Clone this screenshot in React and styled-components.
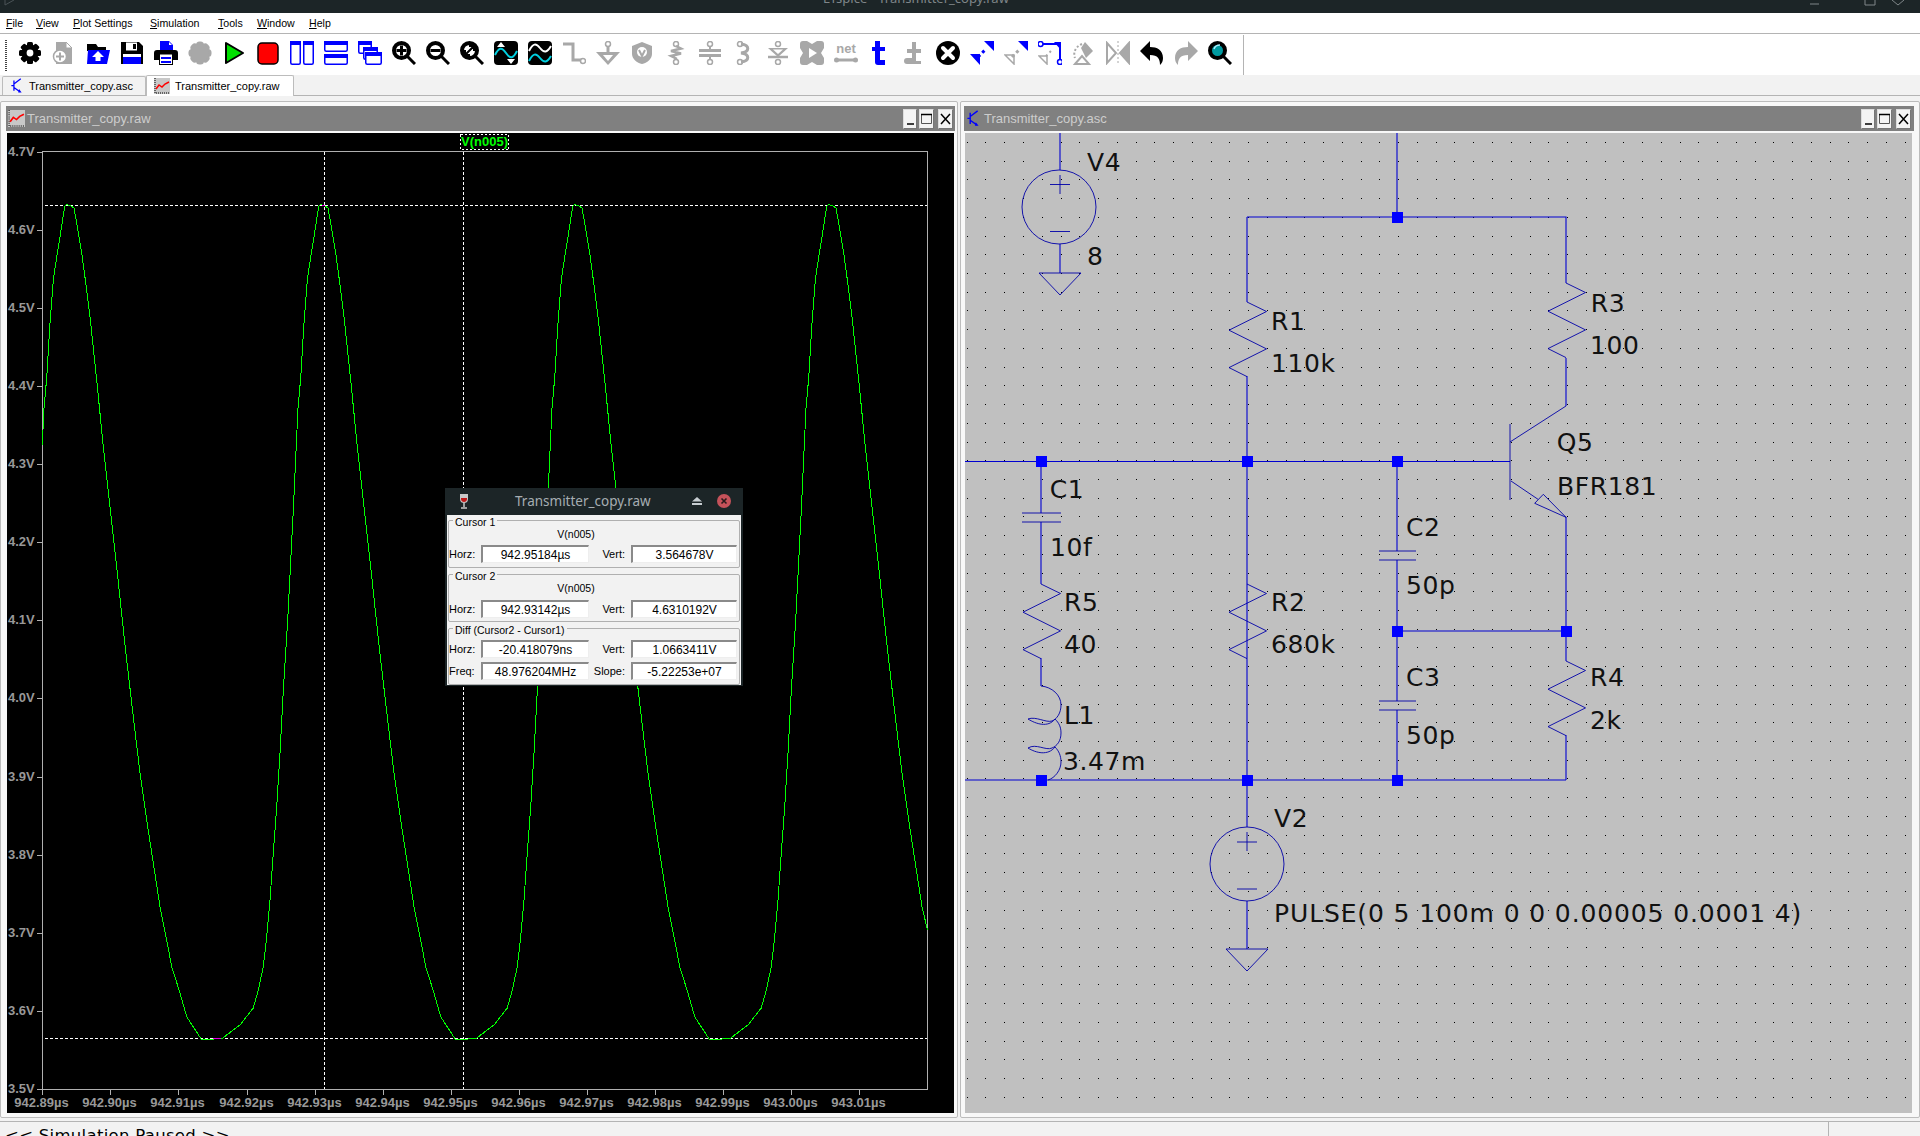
import React from 'react';
import styled, { createGlobalStyle } from 'styled-components';

const Global = createGlobalStyle`
  html, body { margin: 0; padding: 0; background: #f2f2f2; }
  #root { width: 1920px; height: 1136px; overflow: hidden; }
`;
const UI = `"Liberation Sans", Arial, sans-serif`;
const Page = styled.div`
  position: relative; width: 1920px; height: 1136px; overflow: hidden;
  display: flex; flex-direction: column; font-family: ${UI}; font-size: 11px; color: #000; background: #f2f2f2;
`;
const TitleBar = styled.div`
  flex: 0 0 13px; height: 13px; background: #1c2527; overflow: hidden; position: relative;
  display: flex; justify-content: center; padding-right: 88px; box-sizing: border-box;
`;
const TitleText = styled.div`
  font-family: "Noto Sans", sans-serif; font-size: 13px; line-height: 14px; margin-top: -9px; color: #7f8689; white-space: nowrap;
`;
const WmControls = styled.div`
  position: absolute; right: 0; top: 0; width: 120px; height: 13px;
`;
const WmLogo = styled.svg`
  position: absolute; left: 4px; top: 0; width: 14px; height: 6px;
`;
const MenuBar = styled.div`
  flex: 0 0 21px; height: 21px; box-sizing: border-box; background: #fff; border-bottom: 1px solid #b4b4b4;
  display: flex; align-items: center; padding: 1px 0 0 6px;
`;
const MenuItem = styled.div`
  width: ${p => p.$w}px; font-size: 10.6px; white-space: nowrap; padding-bottom: 1px;
  u { text-decoration-thickness: 1px; text-underline-offset: 1px; }
`;
const ToolBar = styled.div`
  flex: 0 0 41px; height: 41px; background: #fff; position: relative; display: flex; align-items: flex-start; padding: 7px 0 0 5px; box-sizing: border-box;
`;
const Grip = styled.div`
  width: 2px; height: 31px; margin-top: -1px; margin-right: 11px;
  background: repeating-linear-gradient(to bottom, #444 0 1px, #fff 1px 2px);
`;
const Tools = styled.div`display: flex; gap: 10px;`;
const IconBox = styled.svg`width: 24px; height: 24px; display: block;`;
const ToolSep = styled.div`width: 1px; height: 40px; margin: -6px 0 0 11px; background: #b4b4b4;`;
const TabBar = styled.div`
  flex: 0 0 21px; height: 21px; box-sizing: border-box; background: #f2f2f2; border-bottom: 1px solid #b4b4b4;
  display: flex; align-items: flex-end; padding-left: 2px;
`;
const Tab = styled.div`
  box-sizing: border-box; display: flex; align-items: center; gap: ${p => p.$active ? 5 : 7}px; height: ${p => p.$active ? 21 : 19}px;
  width: ${p => p.$active ? 148 : 144}px; padding-left: ${p => p.$active ? 7 : 8}px; font-size: 11px;
  background: ${p => p.$active ? '#fff' : '#f2f2f2'}; border: 1px solid #bcbcbc; border-bottom: 0; margin-bottom: ${p => p.$active ? -1 : 0}px;
  border-radius: 2px 2px 0 0; white-space: nowrap;
`;
const Mdi = styled.div`
  flex: 0 0 1025px; height: 1025px; box-sizing: border-box; display: flex; padding-top: 5px; gap: 2px; background: #f2f2f2;
`;
const Win = styled.div`
  box-sizing: border-box; width: ${p => p.$w}px; height: 1017px; border: 1px solid #bcbcbc; border-radius: 2px; background: #f8f8f8;
  padding: 4px ${p => p.$pr}px 0 ${p => p.$pl}px; display: flex; flex-direction: column;
`;
const WinTitle = styled.div`
  height: 25px; flex: 0 0 25px; background: #808080; display: flex; align-items: center; padding: 0 ${p => p.$pr}px 0 ${p => p.$pl}px; gap: 2px;
  color: #cdcdcd; font-size: 13px; margin-bottom: 2px;
`;
const WinName = styled.span`flex: 1; white-space: nowrap; margin-left: ${p => p.$ml || 0}px;`;
const WinBtn = styled.div`
  box-sizing: border-box; width: ${p => p.$w}px; height: 20px; background: #f4f4f4; border: 1px solid #ddd; border-right-color: #777; border-bottom-color: #777;
  display: flex; align-items: center; justify-content: center; margin-left: ${p => p.$ml}px;
`;
const Canvas = styled.svg`display: block; flex: 0 0 980px; width: 947px; height: 980px; margin-left: 1px; background: ${p => p.$bg};`;
const StatusBar = styled.div`
  flex: 0 0 15px; height: 15px; box-sizing: border-box; border-top: 1px solid #b4b4b4; padding: 4px 0 0 5px; display: flex; overflow: hidden; background: #f2f2f2;
`;
const StatusText = styled.div`font-family: "DejaVu Sans", sans-serif; font-size: 16.5px; letter-spacing: 0.3px; line-height: 20px; width: 1823px; white-space: nowrap;`;
const StatusCell = styled.div`border-left: 1px solid #b4b4b4; flex: 1; margin-top: -4px; height: 20px;`;

const AxisText = styled.text`font-family: ${UI}; font-weight: 700; font-size: 13px; fill: #989898;`;
const TraceText = styled.text`font-family: ${UI}; font-weight: 700; font-size: 13px; fill: #00ff00;`;
const SchText = styled.text`font-family: "DejaVu Sans", sans-serif; font-size: 25px; letter-spacing: ${p => p.$ls}px; fill: #111;`;

const Dialog = styled.div`
  position: absolute; left: 445px; top: 488px; width: 298px; height: 198px; background: #1c2527; box-sizing: border-box; padding: 0 2px 2px; display: flex; flex-direction: column;
`;
const DlgHead = styled.div`
  height: 27px; flex: 0 0 27px; box-sizing: border-box; padding: 0 0 2px 12px; display: flex; align-items: center; color: #a6adb2; font-family: "Noto Sans", sans-serif; font-size: 13.5px;
`;
const DlgTitle = styled.span`margin-left: 46px; flex: 1; white-space: nowrap;`;
const DlgBody = styled.div`flex: 1; background: #f2f2f2; padding: 5px 1px 0; display: flex; flex-direction: column; gap: 6px;`;
const Group = styled.div`
  position: relative; box-sizing: border-box; height: ${p => p.$h}px; border: 1px solid #b0b0b0; border-radius: 2px; padding-top: ${p => p.$pt}px;
  display: flex; flex-direction: column; gap: ${p => p.$gap}px;
`;
const Legend = styled.span`position: absolute; left: 4px; top: -5px; background: #f2f2f2; padding: 0 2px; font-size: 10.5px; line-height: 12px; white-space: nowrap;`;
const Trace = styled.div`text-align: center; font-size: 10.5px; line-height: 14px; padding-right: 36px;`;
const Row = styled.div`display: grid; grid-template-columns: 32px 108px 42px 106px; align-items: center; height: 18px;`;
const RowLabel = styled.span`font-size: 11px; ${p => p.$right ? 'text-align: right; padding-right: 6px;' : ''}`;
const Field = styled.div`
  box-sizing: border-box; height: 18px; background: #fff; border-top: 2px solid #8a8a8a; border-left: 2px solid #8a8a8a; border-right: 1px solid #eee; border-bottom: 1px solid #eee;
  text-align: center; font-size: 12px; line-height: 16px; white-space: nowrap;
`;

const G = '#a8a8a8', B = '#0000ff';
const I = ({ children }) => <IconBox viewBox="0 0 24 24">{children}</IconBox>;
const gear = c => (
  <g fill={c}>
    {[0, 45, 90, 135].map(a => <rect key={a} x="9" y="1" width="6" height="22" rx="1.5" transform={`rotate(${a} 12 12)`} />)}
    <circle cx="12" cy="12" r="8.5" /><circle cx="12" cy="12" r="3.4" fill="#fff" />
  </g>
);
const mag = (inner, fill = '#fff') => (
  <g>
    <line x1="15" y1="15" x2="23" y2="23" stroke="#000" strokeWidth="3" />
    <circle cx="9.5" cy="9.5" r="7.5" fill={fill} stroke="#000" strokeWidth="4" />
    {inner}
  </g>
);
const win = (x, y, w, h) => (
  <g key={`${x}${y}`}>
    <rect x={x + .75} y={y + .75} width={w - 1.5} height={h - 1.5} rx="1.5" fill="#fff" stroke={B} strokeWidth="1.5" />
    <rect x={x} y={y} width={w} height="4" fill={B} />
  </g>
);
const icons = [
  <I>{gear('#000')}</I>,
  <I><path d="M4 1h10l6 6v16H4z" fill={G} /><path d="M14 1l6 6h-6z" fill="#fff" stroke={G} /><circle cx="8" cy="15.5" r="6.5" fill="#fff" stroke={G} strokeWidth="1.5" /><path d="M8 11.5v8M4 15.5h8" stroke={G} strokeWidth="2" /></I>,
  <I><path d="M1 3h9l2 3h8v4H1z" fill="#000" /><path d="M2 9h22l-3 14H1z" fill={B} /><path d="M12 10l6 6h-3.5v4h-5v-4H6z" fill="#fff" /></I>,
  <I><path d="M1 1h18l4 4v18H1z" fill="#000" /><rect x="6" y="1.500" width="11" height="8" fill="#fff" /><rect x="13" y="3" width="3" height="5" fill="#000" /><rect x="3" y="15" width="18" height="8" fill={B} /><rect x="3" y="13" width="18" height="3" fill="#fff" /></I>,
  <I><path d="M6 0h9l4 4v6H6z" fill={B} /><path d="M15 1l3 3h-3z" fill="#fff" /><path d="M3 9h18a3 3 0 0 1 3 3v7h-5v-4H5v4H0v-7a3 3 0 0 1 3-3z" fill="#000" /><rect x="5.500" y="13" width="13" height="10.500" fill="#fff" stroke="#000" /><path d="M7 16h10v2H7zM7 20h10v2H7z" fill={B} /></I>,
  <I><g fill={G}>{[0, 45, 90, 135].map(a => <rect key={a} x="8" y="0.500" width="8" height="23" rx="3.500" transform={`rotate(${a} 12 12)`} />)}<circle cx="12" cy="12" r="9" /></g></I>,
  <I><path d="M4 2l17 10L4 22z" fill="#00e000" stroke="#000" strokeWidth="2" strokeLinejoin="round" /></I>,
  <I><rect x="2" y="2" width="20" height="21" rx="4" fill="#ff0000" stroke="#000" strokeWidth="1.5" /></I>,
  <I>{win(0, 0, 11, 24)}{win(13, 0, 11, 24)}</I>,
  <I>{win(0, 0, 24, 11)}{win(0, 13, 24, 11)}</I>,
  <I>{win(0, 0, 14, 13)}{win(5, 6, 15, 13)}{win(7, 11, 17, 13)}</I>,
  <I>{mag(<path d="M9.500 4.500v10M4.500 9.500h10" stroke="#000" strokeWidth="3" />)}</I>,
  <I>{mag(<path d="M4.500 9.500h10" stroke="#000" strokeWidth="3" />)}</I>,
  <I>{mag(<path d="M5 14L14 5M9 5h5v5M5 9v5h5" stroke="#000" strokeWidth="2" fill="none" />)}</I>,
  <I><rect width="24" height="24" rx="4" fill="#000" /><path d="M1 14c4-8 7-8 11-2s7 6 11-2" fill="none" stroke="#00d0e0" strokeWidth="2" /><path d="M7 1l4 5H3zM17 23l-4-5h8z" fill="#fff" /></I>,
  <I><rect width="24" height="24" rx="4" fill="#000" /><path d="M1 10c4-8 7-8 11-3s7 5 11-2" fill="none" stroke="#fff" strokeWidth="2" /><path d="M1 20c4-8 7-8 11-3s7 5 11-2" fill="none" stroke="#00d0e0" strokeWidth="2" /></I>,
  <I><path d="M1 3h10v16h9" fill="none" stroke={G} strokeWidth="3" /><circle cx="21" cy="20" r="2.500" fill="#fff" stroke={G} strokeWidth="1.500" /></I>,
  <I><circle cx="12" cy="3" r="2.500" fill="#fff" stroke={G} strokeWidth="1.500" /><path d="M12 5v7" stroke={G} strokeWidth="3" /><path d="M0 11h24L12 24z" fill={G} /><path d="M7 14h10l-5 6z" fill="#fff" /></I>,
  <I><path d="M12 1l10 4v8c0 5-5 9-10 10C7 22 2 18 2 13V5z" fill={G} /><circle cx="12" cy="11" r="5" fill="#fff" /><path d="M9 9l3 6 3-6" stroke={G} strokeWidth="2" fill="none" /></I>,
  <I><circle cx="12" cy="3" r="2.500" fill="#fff" stroke={G} strokeWidth="1.500" /><circle cx="12" cy="21" r="2.500" fill="#fff" stroke={G} strokeWidth="1.500" /><path d="M12 5l5 2.500L7 10l10 2.500L7 15l5 2.500V19" fill="none" stroke={G} strokeWidth="2.500" /></I>,
  <I><circle cx="12" cy="3" r="2.500" fill="#fff" stroke={G} strokeWidth="1.500" /><circle cx="12" cy="21" r="2.500" fill="#fff" stroke={G} strokeWidth="1.500" /><path d="M12 5v4M12 15v4" stroke={G} strokeWidth="2" /><path d="M1 9.500h22M1 14.500h22" stroke={G} strokeWidth="3" /></I>,
  <I><circle cx="8" cy="3" r="2.500" fill="#fff" stroke={G} strokeWidth="1.500" /><circle cx="8" cy="21" r="2.500" fill="#fff" stroke={G} strokeWidth="1.500" /><path d="M9 3c9 1 9 8 0 9 9 1 9 8 0 9" fill="none" stroke={G} strokeWidth="3" /></I>,
  <I><circle cx="12" cy="3" r="2.500" fill="#fff" stroke={G} strokeWidth="1.500" /><circle cx="12" cy="21" r="2.500" fill="#fff" stroke={G} strokeWidth="1.500" /><path d="M2 7h20L12 16z" fill={G} /><path d="M7 8.500h10L12 13z" fill="#fff" /><path d="M2 16h20" stroke={G} strokeWidth="2.500" /></I>,
  <I><rect width="24" height="24" rx="3" fill={G} /><path d="M9 7l8 5-8 5z" fill="#fff" /><path d="M0 7l3 5-3 5zM24 7l-3 5 3 5zM7 0h10l-5 3zM7 24h10l-5-3z" fill="#fff" /></I>,
  <I><text x="12" y="12" textAnchor="middle" fontFamily={UI} fontWeight="700" fontSize="13" fill={G}>net</text><path d="M2 19h20" stroke={G} strokeWidth="3" /><circle cx="2.500" cy="19" r="2.500" fill={G} /><circle cx="21.500" cy="19" r="2.500" fill={G} /></I>,
  <I><path d="M7 0h5v6h5v4h-5v9h5v5H10q-3 0-3-3V10H4V6h3z" fill={B} /></I>,
  <I><path d="M10 1h4v7h5v4h-5v8h5v3H5a3 3 0 0 1 0-6h5v-5H5V8h5z" fill={G} /></I>,
  <I><circle cx="12" cy="12" r="12" fill="#000" /><path d="M7 7l10 10M17 7L7 17" stroke="#fff" strokeWidth="4" strokeLinecap="round" /></I>,
  <I><path d="M14 0h10v10zM0 13h10v11z" fill={B} /><path d="M8 16l8-8" stroke={B} strokeWidth="3" strokeDasharray="3 3" /></I>,
  <I><path d="M14 0h10v10z" fill={B} /><path d="M1 14h9v9z" fill="#fff" stroke={G} strokeWidth="1.500" /><path d="M8 16l8-8" stroke={G} strokeWidth="3" strokeDasharray="3 3" /></I>,
  <I><path d="M2 3h20v17" fill="none" stroke={B} strokeWidth="2" /><circle cx="2.500" cy="3" r="2.500" fill="#fff" stroke={B} strokeWidth="1.500" /><circle cx="22" cy="21" r="2.500" fill="#fff" stroke={B} strokeWidth="1.500" /><path d="M16 1h7v8z" fill={B} /><path d="M1 15h8v8z" fill="#fff" stroke={G} strokeWidth="1.500" /><path d="M8 15l7-7" stroke={G} strokeWidth="2" strokeDasharray="2 3" /></I>,
  <I><path d="M13 1l8 9-7 7-5-10z" fill={G} /><path d="M3 23l7-8 7 8z" fill="#fff" stroke={G} strokeWidth="2" /><path d="M10 3C3 6 1 12 3 17" fill="none" stroke={G} strokeWidth="2" strokeDasharray="2 2" /></I>,
  <I><path d="M1 2l9 10-9 10zM23 2l-9 10 9 10z" fill="#fff" stroke={G} strokeWidth="2" /><path d="M23 2l-9 10 9 10z" fill={G} /><path d="M12 0v24" stroke={G} strokeDasharray="2 2" /></I>,
  <I><path d="M10 0v6c7 0 13 3 13 11 0 3-1 5-3 7 0-6-2-10-10-10v6L0 10z" fill="#000" /></I>,
  <I><path d="M14 0v6C7 6 1 9 1 17c0 3 1 5 3 7 0-6 2-10 10-10v6l10-10z" fill={G} /></I>,
  <I>{mag(<path d="M6 8c1-3 3-4 6-4" stroke="#aef" strokeWidth="1.500" fill="none" />, '#009aa0')}</I>,
];
const names = ['gear','new','open','save','print','halt','run','stop','tv','th','casc','zi','zo','zf','auto','wave','wire','gnd','label','res','cap','ind','diode','comp','net','text','dir','del','move','drag','dragw','rot','mirror','undo','redo','find'];

const TransIcon = ({ s = 13 }) => (
  <svg width={s} height={s * 1.4} viewBox="0 0 12 18"><path d="M3 3v12M0 9h3M3 7l8-6M3 11l7 5" fill="none" stroke="#0000ff" strokeWidth="1.500" /><path d="M9 13l3 4-4 0z" fill="#0000ff" /></svg>
);
const PlotIcon = ({ s = 16 }) => (
  <svg width={s} height={s} viewBox="0 0 16 16"><rect width="16" height="16" fill="#c8c8c8" /><path d="M1 0v15h15" fill="none" stroke="#000" strokeDasharray="1 1" /><path d="M2 11l3-4 3 2 3-3 4-2" fill="none" stroke="#ff0000" strokeWidth="1.500" /></svg>
);

const ptsBase = [
  [42.3,445],[44,408],[46.7,378],[50,323],[53.3,280],[56.7,257],[60,237],[63.3,215],[65,205.7],[66.7,204.5],[70.7,205.7],[74,208],[77.3,226.7],[81.7,253],[86.7,290],[90,316.7],[96.7,380],[103.3,446.7],[110,506.7],[116.7,566.7],[122.3,620],[126.7,660],[133.3,716.7],[140,773],[146.7,820],[153.3,863],[160,906.7],[166.7,940],[171.7,966.7],[180,993],[186.7,1016.7],[201.3,1039.3],[212,1039.3],[222.7,1038],[240,1025],[253.3,1008],[258.3,990],[263.3,966.7],[266.7,936.7],[270,900],[273.3,853],[276.7,806.7],[280,753],[283.3,690],[287.7,620],[293.3,510],
];
const wavePts = [];
for (let k = 0; k < 4; k++) for (const [x, y] of ptsBase) { const nx = x + k * 254; if (nx <= 928) wavePts.push(`${nx},${y}`); }
wavePts.push('927.5,930');

const Plot = () => {
  const yl = ['4.7V','4.6V','4.5V','4.4V','4.3V','4.2V','4.1V','4.0V','3.9V','3.8V','3.7V','3.6V','3.5V'];
  const xl = ['942.89','942.90','942.91','942.92','942.93','942.94','942.95','942.96','942.97','942.98','942.99','943.00','943.01'];
  const A = '#b0b0b0';
  return (
    <Canvas $bg="#000" viewBox="7 133 947 980">
      <rect x="42.500" y="151.500" width="885" height="937.500" fill="none" stroke={A} shapeRendering="crispEdges" />
      {yl.map((t, i) => {
        const y = Math.round(151.6 + i * 78.12) + .5;
        return <g key={t}><path d={`M37 ${y}h6`} stroke={A} shapeRendering="crispEdges" /><AxisText x="8" y={y + 3.5}>{t}</AxisText></g>;
      })}
      {xl.map((t, i) => {
        const x = Math.round(42.3 + i * 68.07) + .5;
        return <g key={t}><path d={`M${x} 1089v6`} stroke={A} shapeRendering="crispEdges" /><AxisText x={x - 1} y="1107" textAnchor="middle">{t}µs</AxisText></g>;
      })}
      <g stroke="#fff" strokeDasharray="3 2" shapeRendering="crispEdges">
        <path d="M45 205.500H927" /><path d="M45 1038.500H927" /><path d="M324.500 152V1089" /><path d="M463.500 152V1089" />
      </g>
      <polyline points={wavePts.join(' ')} fill="none" stroke="#00ff00" shapeRendering="crispEdges" />
      <path d="M213 1038.500h8M322 205.500h3" stroke="#e000e0" shapeRendering="crispEdges" />
      <rect x="460.500" y="134.500" width="48" height="15" fill="none" stroke="#fff" strokeDasharray="2 2" shapeRendering="crispEdges" />
      <TraceText x="484.500" y="146" textAnchor="middle">V(n005)</TraceText>
    </Canvas>
  );
};

const dots = (() => {
  let d = '';
  for (let i = 0; i <= 50; i++) for (let j = 0; j <= 52; j++) d += `M${Math.round(966.7 + i * 18.76)} ${Math.round(142 + j * 18.72)}h1v1h-1z`;
  return d;
})();
const zig = (x, y) => `M${x} ${y}l19.500 9.500l-37.500 18.700l37.500 18.700l-37.500 18.700l18 9`;
const W = '#0000d0', C = '#0000a8';
const nodes = [[1397,217],[1041,461],[1247,461],[1397,461],[1397,631],[1566,631],[1041,780],[1247,780],[1397,780]];
const labels = [
  ['V4',1087,170.700],['8',1087,264.700],['R1',1271,329.700],['110k',1271,372],['R3',1590.700,311.700],['100',1590,354],
  ['Q5',1556.700,450.700],['BFR181',1557,494.700],['C1',1049.700,498],['10f',1050,555.700],['R5',1064,611],['40',1064,653],
  ['L1',1064,724],['3.47m',1063,770],['R2',1271,611],['680k',1271,653],['C2',1406,536],['50p',1406,593.700],['C3',1406,686],['50p',1406,744],
  ['R4',1590,686],['2k',1590,728.500],['V2',1274,827],
];
const Schematic = () => (
  <Canvas $bg="#c0c0c0" viewBox="965 133 947 980">
    <path d={dots} fill="#000" shapeRendering="crispEdges" />
    <g fill="none" stroke={W} strokeWidth="1.100">
      <path d="M1060 133V170M1060 244V273" />
      <path d="M1397 133V217M1247 217H1566V283M1247 217V302M1247 376V780M965 461.500H1510M965 780H1566" />
      <path d="M1041 461V513M1041 522V584M1041 658V686" />
      <path d="M1397 461V551M1397 560V701M1397 710V780M1397 631H1566M1566 358V406M1566 517V661M1566 735V780" />
      <path d="M1247 780V827M1247 901V949" />
    </g>
    <g fill="none" stroke={C} strokeWidth="0.900">
      <circle cx="1059" cy="207" r="37" /><path d="M1050 184.500h20M1060 175v19M1050 231.500h20" />
      <path d="M1039 273h42l-21 22z" />
      <circle cx="1247" cy="864" r="37" /><path d="M1237 842h20M1247 832v19M1237 889h20" />
      <path d="M1226 949h42l-21 22z" />
      <path d={zig(1247, 302)} /><path d={zig(1566, 283)} /><path d={zig(1041, 584)} /><path d={zig(1247, 584)} /><path d={zig(1566, 661)} />
      <path d="M1022 513h39M1022 522h39M1379 551h37M1379 560h37M1379 701h37M1379 710h37" />
      <path d="M1510 424V500M1510 442L1566 406M1511 481L1538 499.300" />
      <path d="M1543.300 494.300L1534.700 503.300L1566 517.300z" />
      <path d="M1041 686C1052 687 1061 695 1061 705C1061 713 1057 719 1052 721C1046 723 1036 716 1028 719C1036 724 1048 728 1055 719M1055 719C1059 723 1061 727 1061 733C1061 741 1057 746 1052 748C1046 751 1036 743 1028 748C1036 753 1048 756 1055 747M1055 747C1059 751 1061 756 1061 762C1061 770 1055 778 1048 780" />
    </g>
    {nodes.map(([x, y]) => <rect key={`${x}-${y}`} x={x - 5.500} y={y - 5.500} width="11" height="11" fill="#0000ff" shapeRendering="crispEdges" />)}
    {labels.map(([t, x, y], i) => <SchText key={i} $ls={0.6} x={x} y={y}>{t}</SchText>)}
    <SchText $ls={0.88} x="1274" y="922">PULSE(0 5 100m 0 0 0.00005 0.0001 4)</SchText>
  </Canvas>
);

const WinButtons = () => (
  <>
    <WinBtn $w={14} $ml={0}><svg width="9" height="14"><path d="M1 12h7" stroke="#000" strokeWidth="1.500" /></svg></WinBtn>
    <WinBtn $w={15} $ml={0}><svg width="11" height="14"><path d="M.5 2.500h10v9h-10z" fill="none" stroke="#555" /><path d="M0 2.500h11" stroke="#000" strokeWidth="1.500" /></svg></WinBtn>
    <WinBtn $w={15} $ml={2}><svg width="11" height="12"><path d="M1 1l9 10M10 1L1 11" stroke="#000" strokeWidth="1.500" /></svg></WinBtn>
  </>
);

const Menu = [['File',30],['View',37],['Plot Settings',77],['Simulation',68],['Tools',39],['Window',52],['Help',40]];

const CursorGroup = ({ title, h1, v1, gap }) => (
  <Group $h={48} $pt={6} $gap={gap}>
    <Legend>{title}</Legend>
    <Trace>V(n005)</Trace>
    <Row><RowLabel>Horz:</RowLabel><Field>{h1}</Field><RowLabel $right>Vert:</RowLabel><Field>{v1}</Field></Row>
  </Group>
);

export default function App() {
  return (
    <Page>
      <Global />
      <TitleBar>
        <WmLogo viewBox="0 0 14 6"><path d="M1 0v5L10 0" fill="none" stroke="#4a5356" /></WmLogo>
        <TitleText>LTspice - Transmitter_copy.raw</TitleText>
        <WmControls>
          <svg width="120" height="13"><path d="M10 4h9M65 0v5h10V0M92 0l6 5 6-5" fill="none" stroke="#7f8689" /></svg>
        </WmControls>
      </TitleBar>
      <MenuBar>
        {Menu.map(([m, w]) => <MenuItem key={m} $w={w}><u>{m[0]}</u>{m.slice(1)}</MenuItem>)}
      </MenuBar>
      <ToolBar>
        <Grip />
        <Tools>{icons.map((ic, i) => <React.Fragment key={names[i]}>{ic}</React.Fragment>)}</Tools>
        <ToolSep />
      </ToolBar>
      <TabBar>
        <Tab><TransIcon s={11} />Transmitter_copy.asc</Tab>
        <Tab $active><PlotIcon s={16} />Transmitter_copy.raw</Tab>
      </TabBar>
      <Mdi>
        <Win $w={958} $pl={5} $pr={2}>
          <WinTitle $pl={2} $pr={2}><PlotIcon s={17} /><WinName>Transmitter_copy.raw</WinName><WinButtons /></WinTitle>
          <Plot />
        </Win>
        <Win $w={960} $pl={3} $pr={5}>
          <WinTitle $pl={3} $pr={3}><TransIcon s={12} /><WinName $ml={3}>Transmitter_copy.asc</WinName><WinButtons /></WinTitle>
          <Schematic />
        </Win>
      </Mdi>
      <StatusBar>
        <StatusText>&lt;&lt; Simulation Paused &gt;&gt;</StatusText>
        <StatusCell />
      </StatusBar>
      <Dialog>
        <DlgHead>
          <svg width="10" height="16" viewBox="0 0 10 16"><path d="M1 1h8v5c0 3-2 4-4 4S1 9 1 6z" fill="#c8c8c8" /><path d="M2 5h6v1c0 2-1.500 3-3 3S2 8 2 6z" fill="#c01818" /><path d="M5 10v4M2 15h6" stroke="#c8c8c8" strokeWidth="1.500" /></svg>
          <DlgTitle>Transmitter_copy.raw</DlgTitle>
          <svg width="12" height="10" style={{ marginRight: 14 }}><path d="M1 5.500L6 1l5 4.500zM1 7h10v2H1z" fill="#c8ced2" /></svg>
          <svg width="14" height="14" style={{ marginRight: 10 }}><circle cx="7" cy="7" r="7" fill="#c5525a" /><path d="M4.500 4.500l5 5M9.500 4.500l-5 5" stroke="#2a1a1c" strokeWidth="1.600" /></svg>
        </DlgHead>
        <DlgBody>
          <CursorGroup title="Cursor 1" h1="942.95184µs" v1="3.564678V" gap={4} />
          <CursorGroup title="Cursor 2" h1="942.93142µs" v1="4.6310192V" gap={5} />
          <Group $h={57} $pt={11} $gap={4}>
            <Legend>Diff (Cursor2 - Cursor1)</Legend>
            <Row><RowLabel>Horz:</RowLabel><Field>-20.418079ns</Field><RowLabel $right>Vert:</RowLabel><Field>1.0663411V</Field></Row>
            <Row><RowLabel>Freq:</RowLabel><Field>48.976204MHz</Field><RowLabel $right>Slope:</RowLabel><Field>-5.22253e+07</Field></Row>
          </Group>
        </DlgBody>
      </Dialog>
    </Page>
  );
}
